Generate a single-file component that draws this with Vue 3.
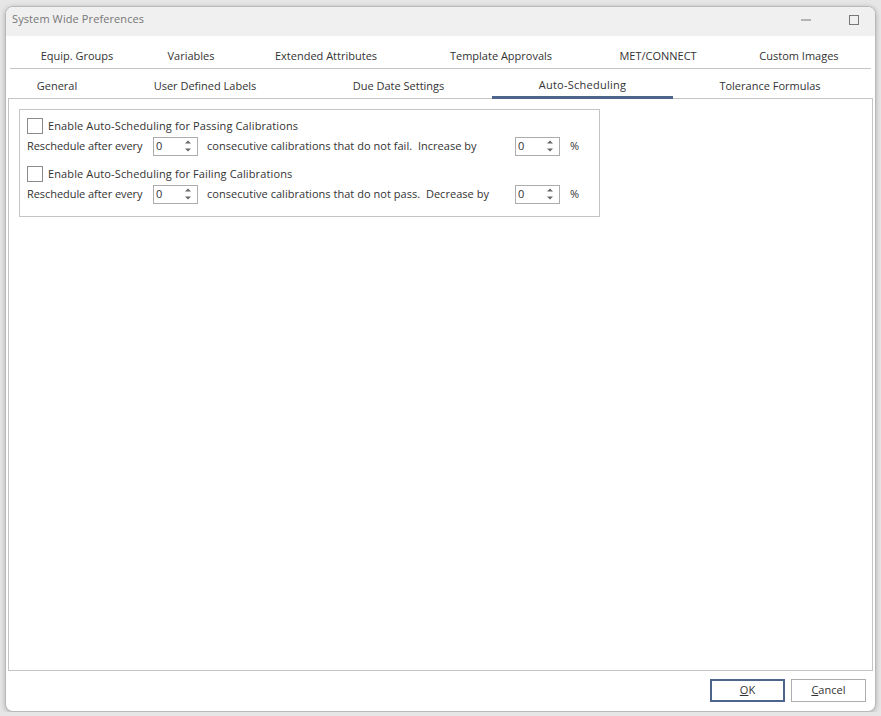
<script setup>
const topTabs = [
  { label: "Equip. Groups", width: 134 },
  { label: "Variables", width: 94 },
  { label: "Extended Attributes", width: 176 },
  { label: "Template Approvals", width: 174 },
  { label: "MET/CONNECT", width: 140 },
  { label: "Custom Images", width: 142 },
];
const bottomTabs = [
  { label: "General", width: 96 },
  { label: "User Defined Labels", width: 200 },
  { label: "Due Date Settings", width: 187 },
  { label: "Auto-Scheduling", width: 181, active: true },
  { label: "Tolerance Formulas", width: 194 },
];
const schedules = [
  { title: "Enable Auto-Scheduling for Passing Calibrations", text: "consecutive calibrations that do not fail.  Increase by" },
  { title: "Enable Auto-Scheduling for Failing Calibrations", text: "consecutive calibrations that do not pass.  Decrease by" },
];
</script>

<template>
  <div class="window">
    <header class="titlebar">
      <span class="title">System Wide Preferences</span>
      <div class="controls">
        <svg width="12" height="12" viewBox="0 0 12 12"><path d="M1 6h10" stroke="#777" fill="none" /></svg>
        <svg width="12" height="12" viewBox="0 0 12 12"><rect x="1.5" y="1.5" width="9" height="9" stroke="#777" fill="none" /></svg>
      </div>
    </header>

    <div class="body">
      <div class="tabs top">
        <div v-for="tab in topTabs" :key="tab.label" class="tab" :style="{ width: tab.width + 'px' }">{{ tab.label }}</div>
      </div>
      <div class="tabs bottom">
        <div
          v-for="tab in bottomTabs"
          :key="tab.label"
          class="tab"
          :class="{ active: tab.active }"
          :style="{ width: tab.width + 'px' }"
        >{{ tab.label }}</div>
      </div>

      <main class="panel">
        <section class="group">
          <template v-for="item in schedules" :key="item.title">
            <label class="check-row">
              <span class="box"></span>
              <span class="check-text">{{ item.title }}</span>
            </label>
            <div class="spin-row">
              <span class="before">Reschedule after every</span>
              <span class="spin">
                <span>0</span>
                <svg width="8" height="14" viewBox="0 0 8 14">
                  <path d="M4 1.5 7 4.5H1z" fill="#666" />
                  <path d="M4 12.5 1 9.5H7z" fill="#666" />
                </svg>
              </span>
              <span class="middle">{{ item.text }}</span>
              <span class="spin">
                <span>0</span>
                <svg width="8" height="14" viewBox="0 0 8 14">
                  <path d="M4 1.5 7 4.5H1z" fill="#666" />
                  <path d="M4 12.5 1 9.5H7z" fill="#666" />
                </svg>
              </span>
              <span class="pct">%</span>
            </div>
          </template>
        </section>
      </main>

      <footer class="actions">
        <button class="btn default"><u>O</u>K</button>
        <button class="btn"><u>C</u>ancel</button>
      </footer>
    </div>
  </div>
</template>

<style>
html,
body {
  margin: 0;
  background: #e6e6e6;
}
</style>

<style scoped>
.window {
  box-sizing: border-box;
  width: 871px;
  height: 706px;
  margin: 6px 0 0 5px;
  display: flex;
  flex-direction: column;
  background: #fff;
  border: 1px solid #b9b9b9;
  border-radius: 8px;
  overflow: hidden;
  box-shadow: 0 1px 5px rgba(0, 0, 0, 0.25);
  font-family: "Open Sans", "Noto Sans", sans-serif;
  font-size: 11px;
  color: #333;
}
.titlebar {
  height: 29px;
  flex: none;
  display: flex;
  align-items: center;
  justify-content: space-between;
  padding: 0 15px 4px 6px;
  box-sizing: border-box;
  background: #f0f0f0;
}
.title {
  font-size: 11px;
  letter-spacing: 0.1px;
  color: #777;
  padding-bottom: 2px;
}
.controls {
  display: flex;
  gap: 36px;
}
.body {
  flex: 1;
  display: flex;
  flex-direction: column;
  padding: 0 2px;
  min-height: 0;
}
.tabs {
  display: flex;
  flex: none;
}
.top {
  height: 32px;
  margin: 0 2px;
  border-bottom: 1px solid #c4c4c4;
  box-sizing: content-box;
}
.bottom {
  height: 29px;
  margin-left: 1px;
  position: relative;
}
.tab {
  box-sizing: border-box;
  flex: none;
  display: flex;
  align-items: center;
  justify-content: center;
}
.top .tab {
  padding-top: 6px;
}
.bottom .tab {
  padding-top: 3px;
}
.bottom .active {
  border-bottom: 3px solid #4d648c;
  height: 30px;
  padding-top: 3px;
  letter-spacing: 0.25px;
  position: relative;
  z-index: 1;
}
.panel {
  flex: 1;
  box-sizing: border-box;
  border: 1px solid #c4c4c4;
  padding: 10px;
  min-height: 0;
}
.group {
  box-sizing: border-box;
  width: 581px;
  height: 108px;
  border: 1px solid #c4c4c4;
  padding: 8px 7px;
}
.check-row {
  display: flex;
  align-items: center;
  gap: 5px;
  height: 16px;
}
.check-text {
  letter-spacing: 0.12px;
  padding-bottom: 2px;
}
.box {
  box-sizing: border-box;
  width: 16px;
  height: 16px;
  border: 1px solid #8c8c8c;
}
.spin-row {
  display: flex;
  align-items: center;
  height: 20px;
  margin: 2px 0 10px;
  white-space: pre;
  letter-spacing: 0.03px;
}
.before,
.middle,
.pct {
  padding-bottom: 2px;
}
.before {
  width: 126px;
  letter-spacing: -0.06px;
}
.spin {
  box-sizing: border-box;
  width: 45px;
  height: 19px;
  border: 1px solid #acacac;
  display: flex;
  align-items: center;
  justify-content: space-between;
  padding: 0 5px 2px 2px;
}
.spin svg {
  margin-bottom: -2px;
}
.middle {
  width: 317px;
  padding-left: 9px;
  box-sizing: border-box;
}
.pct {
  margin-left: 10px;
}
.actions {
  flex: none;
  height: 40px;
  box-sizing: border-box;
  display: flex;
  justify-content: flex-end;
  align-items: center;
  gap: 6px;
  padding: 0 7px 1px 0;
}
.btn {
  box-sizing: border-box;
  width: 75px;
  height: 23px;
  padding: 0 0 2px;
  background: #fff;
  border: 1px solid #adadad;
  font: inherit;
  letter-spacing: 0.03px;
  color: inherit;
}
.default {
  border: 2px solid #4d648c;
}
</style>
